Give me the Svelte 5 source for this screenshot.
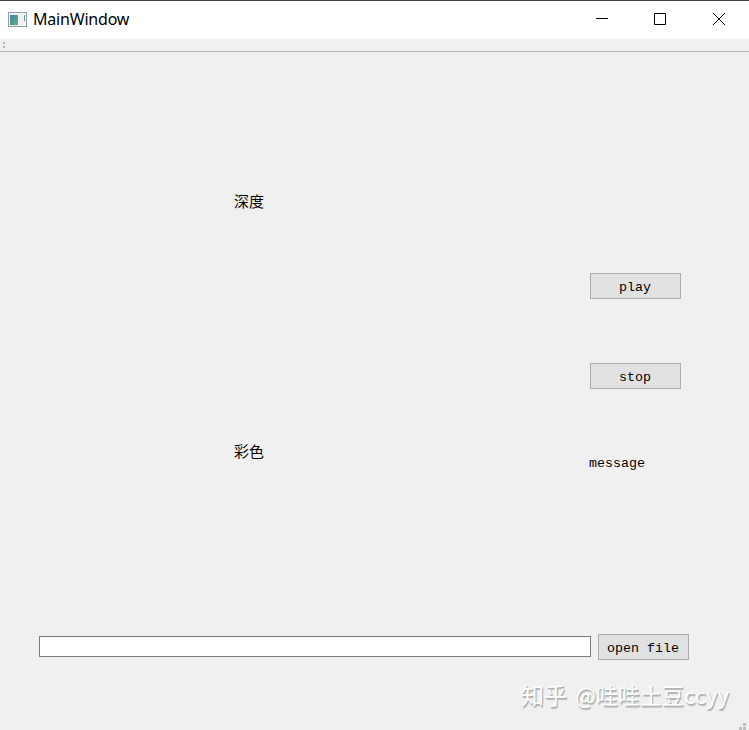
<script>
  let path = $state("");
  let message = $state("message");

  function play() {
    message = "playing";
  }

  function stop() {
    message = "stopped";
  }
</script>

<main>
  <header>
    <svg class="logo" width="19" height="15" viewBox="0 0 19 15">
      <defs>
        <linearGradient id="screen" x1="0" y1="0" x2="1" y2="1">
          <stop offset="0" stop-color="#4a7fa5" />
          <stop offset="1" stop-color="#58b080" />
        </linearGradient>
      </defs>
      <rect x="0.5" y="0.5" width="18" height="14" fill="#f4f5f7" stroke="#979ca5" />
      <rect x="2" y="3" width="8" height="10" fill="url(#screen)" />
      <rect x="11" y="3" width="4" height="10" fill="#eceef0" />
      <path d="M16 3h1v6h-1z" fill="#5f9d91" />
    </svg>
    <h1>MainWindow</h1>
    <div class="controls">
      <svg width="12" height="12" viewBox="0 0 12 12"><path d="M0 5.5h12" /></svg>
      <svg width="12" height="12" viewBox="0 0 12 12"><path d="M.5 .5h11v11h-11z" /></svg>
      <svg width="12" height="12" viewBox="0 0 12 12"><path d="M0 0l12 12M12 0L0 12" /></svg>
    </div>
  </header>

  <div class="toolbar">
    <svg width="6" height="8" viewBox="0 0 6 8">
      <path d="M3 0h2v2h-2zM3 4h2v2h-2z" fill="#b5b5b5" />
    </svg>
  </div>

  <div class="content">
    <div class="views">
      <p>深度</p>
      <p>彩色</p>
    </div>
    <div class="side">
      <button onclick={play}>play</button>
      <button onclick={stop}>stop</button>
      <p>{message}</p>
    </div>
  </div>

  <div class="file">
    <input type="text" bind:value={path} />
    <button>open file</button>
  </div>

  <footer>
    <p>知乎 <span>@哇哇土豆ccyy</span></p>
    <svg width="10" height="7" viewBox="0 0 10 7">
      <path d="M4 0h3v3h-3zM0 4h3v3h-3zM4 4h3v3h-3z" fill="#bdbdbd" />
    </svg>
  </footer>
</main>

<style>
  :global(body) {
    margin: 0;
    overflow: hidden;
  }

  main {
    width: 749px;
    height: 730px;
    box-sizing: border-box;
    display: flex;
    flex-direction: column;
    background: #f0f0f0;
    color: #000;
    font: 13.33px/16px "Liberation Mono", "Noto Sans CJK SC", monospace;
  }

  svg {
    display: block;
  }

  p {
    margin: 0;
  }

  header {
    height: 39px;
    box-sizing: border-box;
    border-top: 1px solid #484446;
    display: flex;
    align-items: center;
    padding: 0 24px 0 8px;
    background: #fff;
  }

  .logo {
    margin-top: -2px;
  }

  h1 {
    margin: -2px 0 0 6px;
    font: 16px/20px "Noto Sans", "Open Sans", sans-serif;
    letter-spacing: -0.2px;
  }

  .controls {
    display: flex;
    gap: 47px;
    margin: -2px 0 0 auto;
  }

  .controls svg:first-child {
    margin-right: -1px;
  }

  .controls path {
    fill: none;
    stroke: #000;
  }

  .toolbar {
    height: 9px;
    padding-top: 3px;
    border-bottom: 1px solid #b9b9b9;
  }

  .content {
    height: 582px;
    display: flex;
  }

  .views {
    width: 355px;
    padding: 144px 0 0 234px;
    display: flex;
    flex-direction: column;
    gap: 234px;
    font-size: 15px;
  }

  .side {
    padding-top: 221px;
    display: flex;
    flex-direction: column;
  }

  .side button {
    margin: 0 0 64px 1px;
  }

  .side p {
    margin-top: 3px;
  }

  button {
    width: 91px;
    height: 26px;
    box-sizing: border-box;
    border: 1px solid #adadad;
    border-radius: 0;
    padding: 3px 1px 0 0;
    background: #e1e1e1;
    color: #000;
    font: inherit;
  }

  .file {
    display: flex;
    align-items: flex-start;
    gap: 7px;
    padding-left: 39px;
  }

  .file input {
    width: 552px;
    height: 21px;
    box-sizing: border-box;
    border: 1px solid #7a7a7a;
    margin: 2px 0 0;
    padding: 0 3px;
    font: inherit;
    background: #fff;
  }

  footer {
    flex: 1;
    display: flex;
    align-items: flex-end;
    justify-content: flex-end;
  }

  footer p {
    width: 218px;
    margin-bottom: 20px;
    color: #fff;
    font: 23px/32px "Noto Sans CJK SC", sans-serif;
    word-spacing: 3px;
    text-shadow: 1px 1px 0 #b4b4b4, 1px 2px 1px #b0b0b0;
    white-space: nowrap;
  }

  footer span {
    font-size: 22px;
  }
</style>
